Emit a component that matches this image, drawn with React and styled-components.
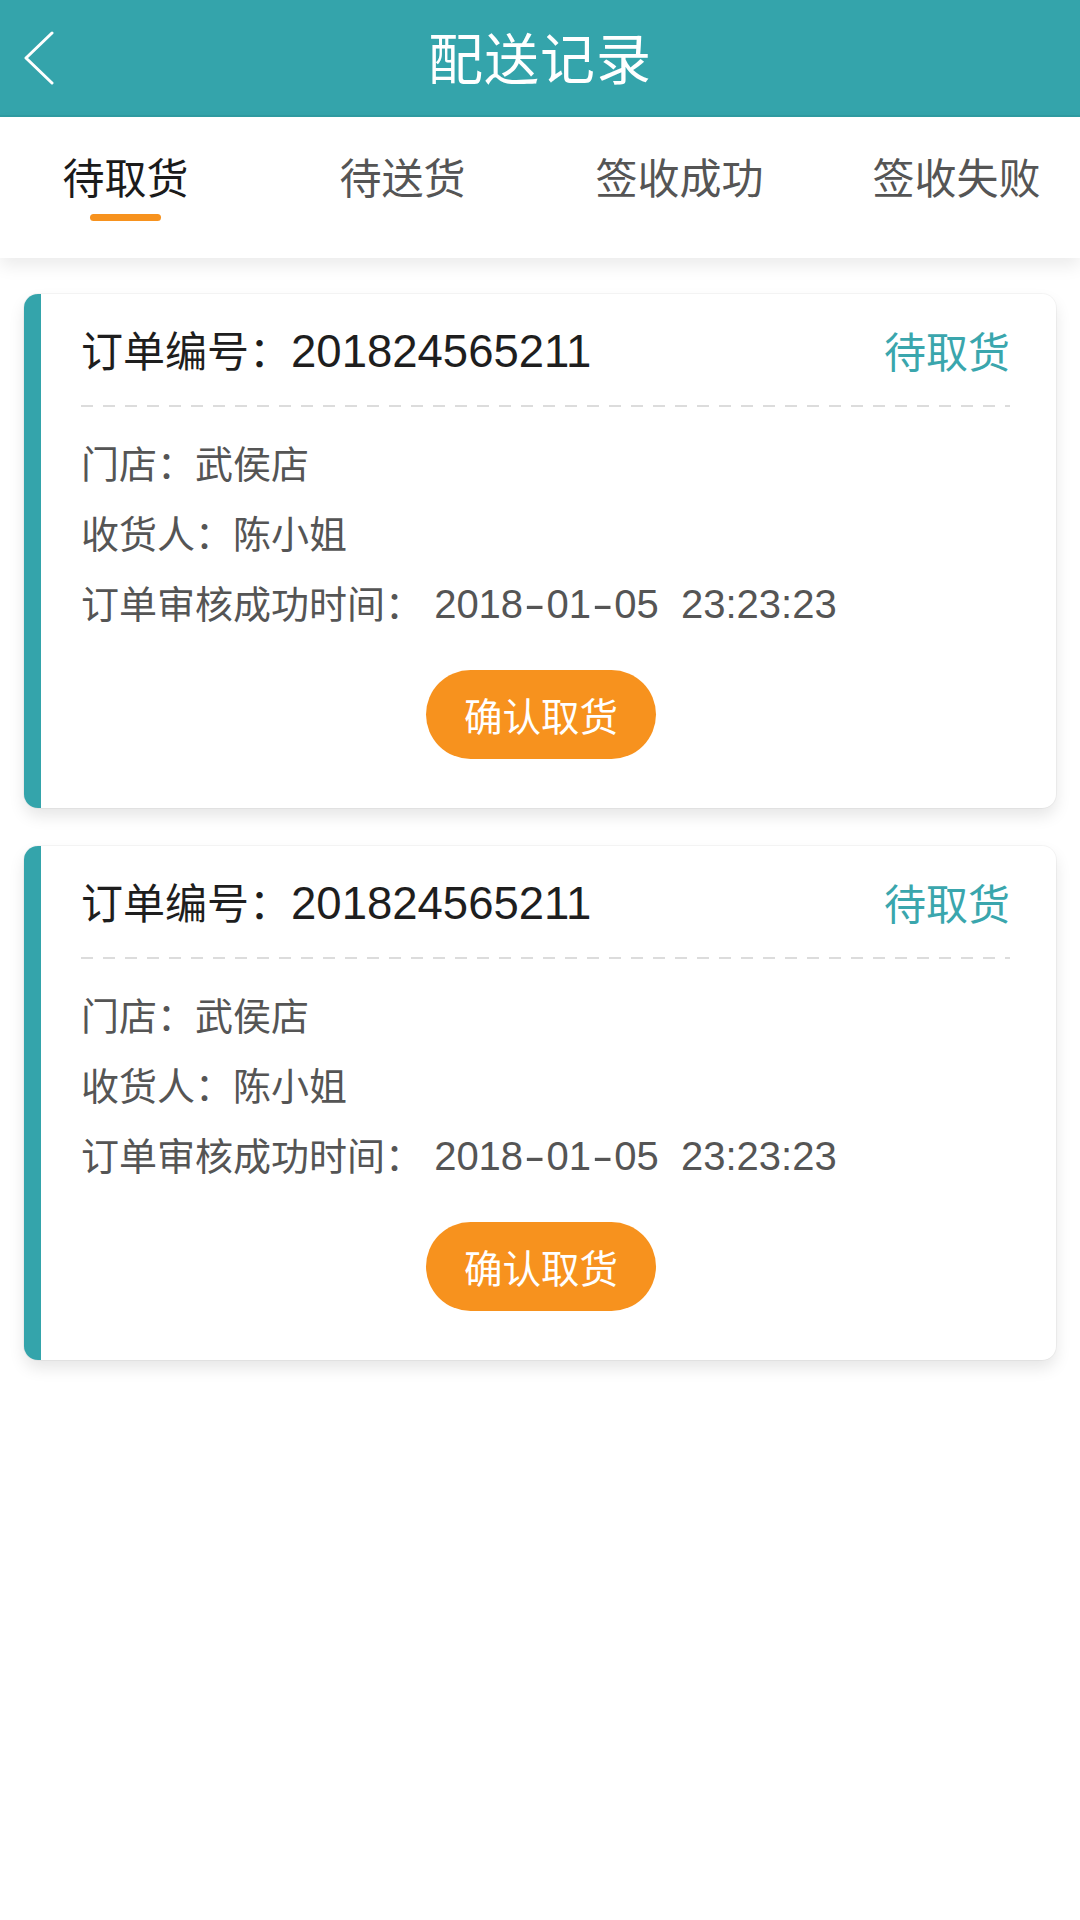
import styled, { createGlobalStyle } from "styled-components";

const GlobalStyle = createGlobalStyle`
  body {
    margin: 0;
    background: #ffffff;
    font-family: "Noto Sans CJK SC", "Noto Sans", sans-serif;
  }
`;

const Page = styled.div`
  width: 1080px;
  min-height: 1920px;
  background: #ffffff;
  overflow: hidden;
`;

const Header = styled.header`
  height: 115px;
  background: #34a4ab;
  border-bottom: 2px solid #2f9ca2;
  display: grid;
  grid-template-columns: 100px 1fr 100px;
  align-items: center;
`;

const Back = styled.div`
  padding-left: 23px;
  display: flex;
  align-items: center;
`;

const Title = styled.h1`
  margin: 0 0 4px;
  text-align: center;
  color: #ffffff;
  font-size: 55px;
  font-weight: 400;
  line-height: 1;
  letter-spacing: 1px;
`;

const TabBar = styled.nav`
  position: relative;
  height: 141px;
  background: #ffffff;
  box-shadow: 0 8px 16px rgba(0, 0, 0, 0.08);
  overflow: hidden;
`;

const TabRow = styled.div`
  display: grid;
  grid-template-columns: repeat(4, 277px);
  margin-left: -13px;
`;

const Tab = styled.div`
  display: flex;
  flex-direction: column;
  align-items: center;
  padding-top: 38px;
  font-size: 42px;
  line-height: 1;
  color: ${(p) => (p.active ? "#1b1b1b" : "#555555")};
`;

const Underline = styled.span`
  margin-top: 17px;
  width: 71px;
  height: 7px;
  border-radius: 4px;
  background: ${(p) => (p.active ? "#f7921e" : "transparent")};
`;

const List = styled.main`
  display: flex;
  flex-direction: column;
  gap: 38px;
  padding: 36px 24px;
`;

const Card = styled.section`
  background: #ffffff;
  border-radius: 14px;
  border-left: 17px solid #34a4ab;
  box-shadow: 0 0 0 1px rgba(0, 0, 0, 0.035), 0 8px 16px rgba(0, 0, 0, 0.1);
  padding: 31px 46px 49px 40px;
`;

const CardHead = styled.div`
  display: flex;
  justify-content: space-between;
  align-items: center;
  height: 50px;
  font-size: 42px;
  line-height: 50px;
`;

const OrderNo = styled.div`
  color: #1e1e1e;
`;

const Status = styled.div`
  color: #3aa6ad;
`;

const Num = styled.span`
  font-family: "Liberation Sans", "Noto Sans", sans-serif;
  font-size: ${(p) => p.size}px;
  white-space: pre;
`;

const Hyphen = styled.span`
  display: inline-block;
  margin: 0 5px;
  transform: scaleX(1.6);
`;

const Dashed = styled.div`
  margin: 30px 0 20px;
  height: 2px;
  background: repeating-linear-gradient(
    to right,
    #dcdcdc 0 12px,
    transparent 12px 22px
  );
`;

const Info = styled.div`
  font-size: 38px;
  line-height: 70px;
  height: 70px;
  color: #555555;
`;

const Actions = styled.div`
  display: flex;
  justify-content: center;
  padding: 33px 9px 0 0;
`;

const Button = styled.button`
  width: 230px;
  height: 89px;
  border: none;
  border-radius: 45px;
  background: #f7921e;
  color: #ffffff;
  font-family: "Noto Sans CJK SC", sans-serif;
  font-size: 38.5px;
  line-height: 1;
  padding: 0;
`;

const tabs = ["待取货", "待送货", "签收成功", "签收失败"];

const orders = [
  {
    id: "201824565211",
    shop: "武侯店",
    receiver: "陈小姐",
    date: ["2018", "01", "05"],
    time: "23:23:23",
  },
  {
    id: "201824565211",
    shop: "武侯店",
    receiver: "陈小姐",
    date: ["2018", "01", "05"],
    time: "23:23:23",
  },
];

function OrderCard({ order }) {
  const [y, m, d] = order.date;
  return (
    <Card>
      <CardHead>
        <OrderNo>
          订单编号：<Num size={45.5}>{order.id}</Num>
        </OrderNo>
        <Status>待取货</Status>
      </CardHead>
      <Dashed />
      <Info>门店：{order.shop}</Info>
      <Info>收货人：{order.receiver}</Info>
      <Info>
        订单审核成功时间：
        <Num size={40}>
          {` ${y}`}
          <Hyphen>-</Hyphen>
          {m}
          <Hyphen>-</Hyphen>
          {d}
          {`  ${order.time}`}
        </Num>
      </Info>
      <Actions>
        <Button>确认取货</Button>
      </Actions>
    </Card>
  );
}

export default function App() {
  return (
    <Page>
      <GlobalStyle />
      <Header>
        <Back>
          <svg width="32" height="54" viewBox="0 0 32 54" fill="none">
            <polyline
              points="29,2 3,27 29,52"
              stroke="#ffffff"
              strokeWidth="3"
              strokeLinecap="round"
              strokeLinejoin="round"
            />
          </svg>
        </Back>
        <Title>配送记录</Title>
        <div />
      </Header>
      <TabBar>
        <TabRow>
          {tabs.map((t, i) => (
            <Tab key={t} active={i === 0}>
              {t}
              <Underline active={i === 0} />
            </Tab>
          ))}
        </TabRow>
      </TabBar>
      <List>
        {orders.map((o, i) => (
          <OrderCard key={i} order={o} />
        ))}
      </List>
    </Page>
  );
}
